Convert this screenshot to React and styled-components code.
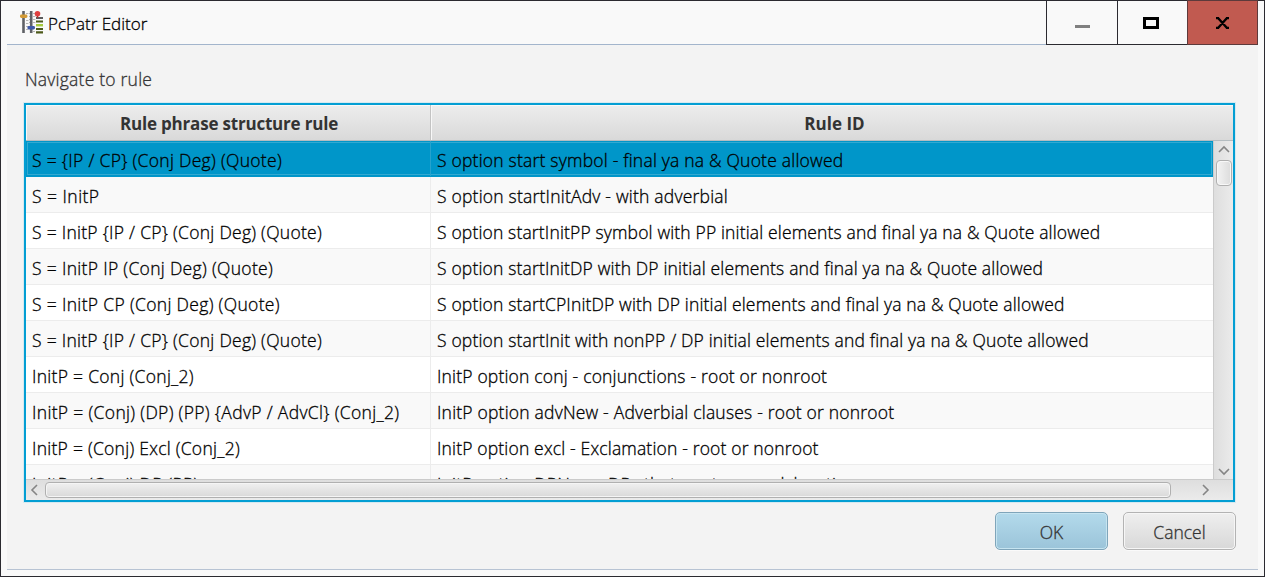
import React from 'react';
import styled, { createGlobalStyle, css } from 'styled-components';

const Global = createGlobalStyle`
  * { box-sizing: border-box; }
  body {
    margin: 0; background: #f9f9f9; color: #000; overflow: hidden;
    font-family: "Open Sans", "Noto Sans", sans-serif; font-weight: 300; -webkit-text-stroke: 0.3px;
  }
`;

const Window = styled.div`
  width: 1265px; height: 577px; border: 1px solid #2b2a30; background: #f9f9f9;
  display: flex; flex-direction: column;
`;
const TitleBar = styled.header`
  height: 44px; display: flex; flex: none; margin: 0 6px 0 6px; padding-left: 13px;
  border-bottom: 1px solid #a3b5cc; align-items: flex-start;
`;
const AppIcon = styled.svg`width: 24px; height: 24px; margin: 9px 4px 0 0; flex: none;`;
const Title = styled.h1`
  margin: 0; font-weight: 300; font-size: 17px; line-height: 24px; padding-top: 11px; flex: 1; white-space: nowrap;
  letter-spacing: 0;
`;
const WindowButton = styled.button`
  height: 45px; width: ${p => p.$w}px; margin: -1px 0 0 -1px; padding: 0 ${p => p.$pr || 0}px 0 0; flex: none;
  border: 1px solid ${p => (p.$danger ? '#5d3a3b' : '#2b2a30')}; background: ${p => (p.$danger ? '#c15a50' : '#f9f9f9')};
  display: flex; align-items: center; justify-content: center;
`;
const Body = styled.main`
  flex: none; height: 525px; margin: 0 6px; padding: 21px 22px 0 18px; background: #f3f3f3;
  border-bottom: 1px solid #b7c3d3; display: flex; flex-direction: column;
`;
const Label = styled.div`
  font-size: 17.5px; line-height: 26px; height: 37px; color: #333; white-space: nowrap; letter-spacing: 0.22px;
`;
const Table = styled.section`
  width: 1211px; height: 399px; margin-left: -1px; border: 2px solid #039ed3; flex: none; background: #fff;
  box-shadow: 0 0 0 1px #d6e9f0; display: flex; flex-direction: column;
`;
const HeadRow = styled.div`display: flex; height: 36px; flex: none; border-bottom: 1px solid #b4bcc0;`;
const HeadCell = styled.div`
  width: ${p => p.$w}px; display: flex; align-items: center; justify-content: center; padding: 2px 0 0 ${p => p.$pl}px;
  font-weight: 700; font-size: 17px; color: #333; white-space: nowrap; -webkit-text-stroke: 0;
  background: linear-gradient(#ededed, #d9d9d9); box-shadow: inset 1px 1px 0 #f8f8f8;
  border-right: ${p => (p.$last ? 0 : 1)}px solid #c3c3c3;
  span { letter-spacing: ${p => p.$ls}px; }
`;
const Middle = styled.div`display: flex; height: 338px; flex: none;`;
const Rows = styled.div`width: 1187px; height: 338px; overflow: hidden;`;
const Row = styled.div`
  height: 36px; display: flex; border-bottom: 1px solid #ececec;
  background: ${p => (p.$alt ? '#f9f9f9' : '#fff')};
  ${p => p.$selected && css`background: #0096c9; border-bottom-color: #0096c9; box-shadow: inset 0 0 0 1px #0096c9, inset 0 0 0 2px #33a9d1;`}
`;
const Cell = styled.div`
  width: ${p => p.$w}px; padding-left: 6px; font-size: 17.5px; line-height: 38px; white-space: pre; flex: none;
  letter-spacing: ${p => p.$ls}px; border-right: ${p => (p.$first ? 1 : 0)}px solid ${p => (p.$selected ? '#26a2cd' : '#ececec')};
`;
const VBar = styled.div`
  width: 20px; border-left: 1px solid #cbcbcb; background: linear-gradient(90deg, #dedede, #ebebeb);
  display: flex; flex-direction: column; align-items: center;
`;
const VThumb = styled.div`
  width: 16px; height: 26px; margin-top: 7px; border: 1px solid #b0b0b0; border-radius: 4px;
  background: linear-gradient(90deg, #f3f3f3, #dcdcdc); box-shadow: inset 0 0 0 1px #f8f8f8;
`;
const HBar = styled.div`
  height: 21px; display: flex; align-items: center; border-top: 1px solid #cbcbcb; background: linear-gradient(#dedede, #ebebeb);
`;
const HThumb = styled.div`
  width: 1126px; height: 16px; border: 1px solid #b0b0b0; border-radius: 4px; margin: 0 0 0 7px;
  background: linear-gradient(#f0f0f0, #d9d9d9); box-shadow: inset 0 0 0 1px #f5f5f5;
`;
const Arrow = styled.svg`display: block; flex: none; fill: none; stroke: #858585; stroke-width: 1.6; margin: ${p => p.$m};`;
const Actions = styled.footer`display: flex; justify-content: flex-end; gap: 15px; padding-top: 10px;`;
const Button = styled.button`
  width: 113px; height: 38px; border-radius: 5px; padding: 1px 0 0; font-family: inherit; font-size: 17.5px; font-weight: 300; color: #333;
  -webkit-text-stroke: 0.3px;
  border: 1px solid ${p => (p.$primary ? '#7fa5ba' : '#b3b3b3')};
  background: ${p => (p.$primary ? 'linear-gradient(#b3daeb, #9bc4d9)' : 'linear-gradient(#efefef, #d8d8d8)')};
  box-shadow: inset 0 0 0 1px ${p => (p.$primary ? '#c6e4f0' : '#f6f6f6')}, 0 1px 0 #fafafa;
`;

const rules = [
  ['S = {IP / CP} (Conj Deg) (Quote)', 0.3, 'S option start symbol - final ya na & Quote allowed', 0.21],
  ['S = InitP', 0.46, 'S option startInitAdv - with adverbial', 0.21],
  ['S = InitP {IP / CP} (Conj Deg) (Quote)', 0.27, 'S option startInitPP symbol with PP initial elements and final ya na & Quote allowed', 0.155],
  ['S = InitP IP (Conj Deg) (Quote)', 0.32, 'S option startInitDP with DP initial elements and final ya na & Quote allowed', 0.16],
  ['S = InitP CP (Conj Deg) (Quote)', 0.33, 'S option startCPInitDP with DP initial elements and final ya na & Quote allowed', 0.16],
  ['S = InitP {IP / CP} (Conj Deg) (Quote)', 0.27, 'S option startInit with nonPP / DP initial elements and final ya na & Quote allowed', 0.17],
  ['InitP = Conj (Conj_2)', 0.285, 'InitP option conj - conjunctions - root or nonroot', 0.18],
  ['InitP = (Conj) (DP) (PP) {AdvP / AdvCl} (Conj_2)', 0.33, 'InitP option advNew - Adverbial clauses - root or nonroot', 0.2],
  ['InitP = (Conj) Excl (Conj_2)', 0.26, 'InitP option excl - Exclamation - root or nonroot', 0.165],
  ['InitP = (Conj) DP (PP)', 0.28, 'InitP option DPNew - DPs that are temporal, locative', 0.18],
];

export default function App() {
  return (
    <>
      <Global />
      <Window>
        <TitleBar>
          <AppIcon viewBox="0 0 24 24">
            <path d="M6 3.5h2.4M6 10.5h2.4M6 13.5h2.4M6 16.5h2.4M6 19.5h2.4M9 3.5h2M9 6.5h2M9 9.5h2M9 12.5h2M13 3.5h2.4M13 6.5h2.4M13 9.5h2.4M13 12.5h2.4M13 21.5h2" stroke="#b4b4b4" />
            <path d="M3.5 1v22M11.2 1v22" stroke="#5f6166" strokeWidth="2.6" />
            <rect x="0" y="4.6" width="7.4" height="3.4" rx="1.4" fill="#d39a35" />
            <rect x="7.4" y="16" width="7.6" height="3.4" rx="1.4" fill="#3e58a8" />
            <path d="M16 8h7" stroke="#333" strokeWidth="1.6" />
            <path d="M16 11.5h7M16 19h7M16 22.3h7" stroke="#4d5a1a" strokeWidth="2.2" />
            <path d="M16 15.2h7" stroke="#a5c93a" strokeWidth="2.4" />
            <circle cx="17.5" cy="3.7" r="2.8" fill="#e04040" />
            <path d="M17.5 6v2" stroke="#a33" />
          </AppIcon>
          <Title>PcPatr Editor</Title>
          <WindowButton $w={72}><svg width="16" height="16"><path d="M1 11.5h15" stroke="#808080" strokeWidth="3" /></svg></WindowButton>
          <WindowButton $w={71} $pr={4}><svg width="16" height="12"><rect x="1.5" y="1.5" width="13" height="9" fill="none" stroke="#000" strokeWidth="3" /></svg></WindowButton>
          <WindowButton $w={71} $danger $pr={1}><svg width="13" height="12"><path d="M0 1h3M10 1h3M0 11h3M10 11h3M2 1l9 10M11 1L2 11" stroke="#000" strokeWidth="2.4" /></svg></WindowButton>
        </TitleBar>
        <Body>
          <Label>Navigate to rule</Label>
          <Table>
            <HeadRow>
              <HeadCell $w={405} $pl={2} $ls={-0.2}><span>Rule phrase structure rule</span></HeadCell>
              <HeadCell $w={802} $pl={5} $ls={0} $last><span>Rule ID</span></HeadCell>
            </HeadRow>
            <Middle>
              <Rows>
                {rules.map(([rule, ruleLs, id, idLs], i) => (
                  <Row key={i} $alt={i % 2 === 1} $selected={i === 0}>
                    <Cell $w={405} $first $selected={i === 0} $ls={ruleLs}>{rule}</Cell>
                    <Cell $w={782} $ls={idLs}>{id}</Cell>
                  </Row>
                ))}
              </Rows>
              <VBar>
                <Arrow width="12" height="8" $m="4px 0 0"><path d="M1 7l5-5 5 5" /></Arrow>
                <VThumb />
                <Arrow width="12" height="8" $m="auto 0 3px"><path d="M1 1l5 5 5-5" /></Arrow>
              </VBar>
            </Middle>
            <HBar>
              <Arrow width="8" height="12" $m="0 0 0 4px"><path d="M7 1L2 6l5 5" /></Arrow>
              <HThumb />
              <Arrow width="8" height="12" $m="0 0 0 31px"><path d="M1 1l5 5-5 5" /></Arrow>
            </HBar>
          </Table>
          <Actions>
            <Button $primary>OK</Button>
            <Button>Cancel</Button>
          </Actions>
        </Body>
      </Window>
    </>
  );
}
